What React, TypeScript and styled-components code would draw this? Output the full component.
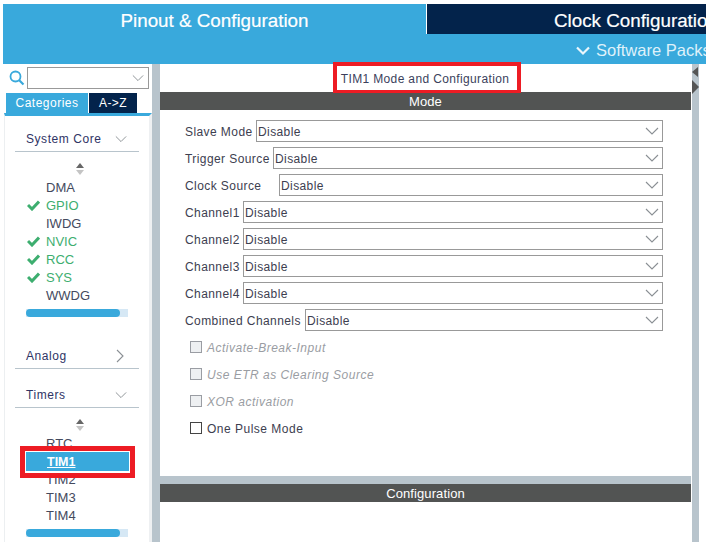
import React from "react";
import styled, { createGlobalStyle } from "styled-components";

const GlobalStyle = createGlobalStyle`
	html, body {
		margin: 0;
		padding: 0;
		background: #fff;
		overflow: hidden;
	}
	* {
		box-sizing: border-box;
	}
`;

const BLUE = "#39a9dc";
const NAVY = "#03234b";
const SPLIT = "#b8c4cc";
const RED = "#ed1c24";

type ItemData = { name: string; ok?: boolean; selected?: boolean };

const coreItems: ItemData[] = [
	{ name: "DMA" },
	{ name: "GPIO", ok: true },
	{ name: "IWDG" },
	{ name: "NVIC", ok: true },
	{ name: "RCC", ok: true },
	{ name: "SYS", ok: true },
	{ name: "WWDG" },
];

const timerItems: ItemData[] = [
	{ name: "RTC" },
	{ name: "TIM1", selected: true },
	{ name: "TIM2" },
	{ name: "TIM3" },
	{ name: "TIM4" },
];

const modeRows = [
	{ label: "Slave Mode", left: 256 },
	{ label: "Trigger Source", left: 273 },
	{ label: "Clock Source", left: 279 },
	{ label: "Channel1", left: 243 },
	{ label: "Channel2", left: 243 },
	{ label: "Channel3", left: 243 },
	{ label: "Channel4", left: 243 },
	{ label: "Combined Channels", left: 305 },
];

const checkRows = [
	{ label: "Activate-Break-Input", disabled: true },
	{ label: "Use ETR as Clearing Source", disabled: true },
	{ label: "XOR activation", disabled: true },
	{ label: "One Pulse Mode", disabled: false },
];

const Chevron = ({ size = 14, color = "#8a8f94", dir = "down" }: { size?: number; color?: string; dir?: "down" | "right" }) => (
	<svg width={size} height={size} viewBox="0 0 14 14" fill="none" stroke={color} strokeWidth="1.1">
		{dir === "down" ? <polyline points="1,4 7,10 13,4" /> : <polyline points="4,1 10,7 4,13" />}
	</svg>
);

const UpDown = () => (
	<ArrowWrap>
		<svg width="10" height="12" viewBox="0 0 10 12">
			<polygon points="5,0 9,5 1,5" fill="#666" />
			<polygon points="5,12 9,7 1,7" fill="#c4c4c4" />
		</svg>
	</ArrowWrap>
);

function SideList({ items }: { items: ItemData[] }) {
	return (
		<>
			<UpDown />
			<List>
				{items.map((item) => (
					<Item key={item.name} $ok={item.ok} $selected={item.selected}>
						{item.ok && (
							<CheckMark width="13" height="11" viewBox="0 0 13 11" fill="none" stroke="#3dae6f" strokeWidth="3">
								<polyline points="1,5 5,9 12,1.5" />
							</CheckMark>
						)}
						{item.selected && <SelectedBar />}
						<ItemName $selected={item.selected}>{item.name}</ItemName>
						{item.selected && <RedOutline />}
					</Item>
				))}
			</List>
			<ScrollTrack>
				<ScrollThumb />
			</ScrollTrack>
		</>
	);
}

export default function App() {
	return (
		<Page>
			<GlobalStyle />
			<Header>
				<TabRow>
					<PinoutTab>Pinout &amp; Configuration</PinoutTab>
					<ClockTab>Clock Configuration</ClockTab>
				</TabRow>
				<SubBar>
					<SubChevron width="14" height="10" viewBox="0 0 14 10" fill="none" stroke="#eaf6fc" strokeWidth="2.2">
						<polyline points="1,1.5 7,7.5 13,1.5" />
					</SubChevron>
					<SubLabel>Software Packs</SubLabel>
				</SubBar>
			</Header>
			<Body>
				<Sidebar>
					<SearchRow>
						<svg width="16" height="16" viewBox="0 0 16 16" fill="none" stroke={BLUE} strokeWidth="1.8">
							<circle cx="6.5" cy="6.5" r="5" />
							<line x1="10" y1="10" x2="14.5" y2="14.5" strokeWidth="2.2" />
						</svg>
						<SearchBox>
							<Chevron size={12} />
						</SearchBox>
					</SearchRow>
					<SideTabs>
						<CategoryTab>Categories</CategoryTab>
						<AzTab>A-&gt;Z</AzTab>
					</SideTabs>
					<SidePanel>
						<SectionHead $first>
							<HeadText>System Core</HeadText>
							<Chevron size={12} />
						</SectionHead>
						<SideList items={coreItems} />
						<SectionHead $top={26}>
							<HeadText>Analog</HeadText>
							<Chevron size={14} dir="right" />
						</SectionHead>
						<SectionHead $top={13}>
							<HeadText>Timers</HeadText>
							<Chevron size={12} />
						</SectionHead>
						<SideList items={timerItems} />
					</SidePanel>
				</Sidebar>
				<Splitter />
				<Main>
					<ModePane>
						<TitleRow>
							<TitleBox>TIM1 Mode and Configuration</TitleBox>
						</TitleRow>
						<DarkBar>Mode</DarkBar>
						<Form>
							{modeRows.map((row) => (
								<FormRow key={row.label}>
									<FieldLabel $width={row.left - 185}>{row.label}</FieldLabel>
									<SelectBox>
										<LowText>Disable</LowText>
										<Chevron />
									</SelectBox>
								</FormRow>
							))}
							{checkRows.map((row) => (
								<CheckRow key={row.label} $disabled={row.disabled}>
									<Box $disabled={row.disabled} />
									<LowText>{row.label}</LowText>
								</CheckRow>
							))}
						</Form>
					</ModePane>
					<HSplit />
					<DarkBar>Configuration</DarkBar>
				</Main>
				<RightEdge>
					<Handle>
						<svg width="6" height="14" viewBox="0 0 6 14">
							<polygon points="6,1 0,6 6,11" fill="#555" />
						</svg>
						<svg width="7" height="14" viewBox="0 0 7 14">
							<polygon points="0,0 7,7 0,14" fill="#555" />
						</svg>
					</Handle>
				</RightEdge>
			</Body>
		</Page>
	);
}

const Page = styled.div`
	width: 706px;
	height: 542px;
	overflow: hidden;
	background: #fff;
	font-family: "Liberation Sans", Arial, sans-serif;
	color: #3b3f5c;
`;

const Header = styled.header`
	height: 60px;
	margin: 4px 0 0 3px;
	background: ${BLUE};
`;

const TabRow = styled.div`
	display: flex;
	height: 30px;
`;

const PinoutTab = styled.div`
	width: 423px;
	text-align: center;
	color: #fff;
	font-size: 18.8px;
	line-height: 34px;
	-webkit-text-stroke: 0.2px #fff;
`;

const ClockTab = styled.div`
	flex: 1;
	margin-left: 1px;
	padding-left: 127px;
	background: ${NAVY};
	box-shadow: -1px 0 0 #fff;
	color: #fff;
	font-size: 18.8px;
	line-height: 34px;
	white-space: nowrap;
	overflow: hidden;
	-webkit-text-stroke: 0.2px #fff;
`;

const SubBar = styled.div`
	display: flex;
	align-items: center;
	gap: 6px;
	height: 30px;
	padding: 3px 0 0 573px;
	white-space: nowrap;
	overflow: hidden;
`;

const SubChevron = styled.svg`
	flex: none;
`;

const SubLabel = styled.span`
	flex: none;
	color: #dff1fa;
	font-size: 16.5px;
`;

const Body = styled.div`
	display: flex;
	height: 478px;
`;

const Sidebar = styled.aside`
	display: flex;
	flex-direction: column;
	width: 152px;
	flex-shrink: 0;
`;

const SearchRow = styled.div`
	display: flex;
	align-items: center;
	gap: 2px;
	height: 29px;
	padding: 2px 3px 3px 9px;
`;

const SearchBox = styled.div`
	display: flex;
	align-items: center;
	justify-content: flex-end;
	flex: 1;
	height: 22px;
	padding-right: 4px;
	border: 1px solid #999;
`;

const SideTabs = styled.div`
	display: flex;
	gap: 1px;
	height: 20px;
	padding-left: 6px;
`;

const CategoryTab = styled.div`
	width: 82px;
	background: ${BLUE};
	color: #fff;
	font-size: 12px;
	line-height: 20px;
	text-align: center;
	letter-spacing: 0.5px;
`;

const AzTab = styled.div`
	width: 48px;
	background: ${NAVY};
	color: #fff;
	font-size: 12px;
	line-height: 20px;
	text-align: center;
	letter-spacing: 0.4px;
`;

const SidePanel = styled.div`
	flex: 1;
	margin-left: 4px;
	border-top: 3px solid ${BLUE};
	border-left: 1px solid #eceff1;
	border-right: 3px solid #eef0f2;
`;

const SectionHead = styled.div<{ $first?: boolean; $top?: number }>`
	display: flex;
	align-items: center;
	justify-content: space-between;
	height: 26px;
	margin: ${(p) => (p.$first ? 10 : p.$top ?? 0)}px 10px 0 10px;
	padding: 0 12px 0 11px;
	border-bottom: 1px solid ${SPLIT};
	font-size: 12px;
	letter-spacing: 0.55px;
	color: #2f3465;
`;

const HeadText = styled.span`
	padding-top: 1px;
`;

const LowText = styled.span`
	padding-top: 2px;
`;

const ArrowWrap = styled.div`
	display: flex;
	justify-content: center;
	height: 26px;
	padding: 11px 0 0 6px;
`;

const List = styled.ul`
	list-style: none;
	margin: 0;
	padding: 0;
`;

const Item = styled.li<{ $ok?: boolean; $selected?: boolean }>`
	position: relative;
	height: 18px;
	padding-left: 41px;
	font-size: 13px;
	line-height: 20px;
	color: ${(p) => (p.$ok ? "#3dae6f" : "#444a5e")};
`;

const ItemName = styled.span<{ $selected?: boolean }>`
	position: relative;
	z-index: 2;
	${(p) =>
		p.$selected &&
		`
		margin-left: 1px;
		color: #fff;
		font-weight: bold;
		text-decoration: underline;
		font-size: 12.5px;
	`}
`;

const CheckMark = styled.svg`
	position: absolute;
	left: 22px;
	top: 4px;
`;

const SelectedBar = styled.div`
	position: absolute;
	z-index: 1;
	left: 21px;
	top: -1px;
	width: 103px;
	height: 20px;
	background: ${BLUE};
`;

const RedOutline = styled.div`
	position: absolute;
	z-index: 3;
	left: 15px;
	top: -6px;
	width: 115px;
	height: 32px;
	border: 5px solid ${RED};
	box-shadow: inset 0 0 0 1px #fff;
`;

const ScrollTrack = styled.div`
	width: 102px;
	height: 8px;
	margin: 5px 0 0 21px;
	background: #d6e8f5;
`;

const ScrollThumb = styled.div`
	width: 94px;
	height: 8px;
	border-radius: 4px;
	background: ${BLUE};
`;

const Splitter = styled.div`
	width: 8px;
	flex-shrink: 0;
	background: ${SPLIT};
`;

const Main = styled.main`
	display: flex;
	flex-direction: column;
	width: 531px;
	flex-shrink: 0;
`;

const ModePane = styled.section`
	height: 412px;
`;

const TitleRow = styled.div`
	display: flex;
	justify-content: center;
	height: 28px;
	font-size: 12px;
	letter-spacing: 0.36px;
`;

const TitleBox = styled.div`
	position: relative;
	z-index: 1;
	height: 31px;
	margin: -2px 0 0 3px;
	padding: 0 8px 0 4px;
	border: 4px solid ${RED};
	border-bottom-width: 3px;
	line-height: 27px;
	white-space: nowrap;
`;

const DarkBar = styled.div`
	height: 18px;
	background: #525453;
	color: #fff;
	font-size: 13px;
	line-height: 19px;
	letter-spacing: 0.1px;
	text-align: center;
`;

const Form = styled.div`
	display: flex;
	flex-direction: column;
	gap: 5px;
	padding: 10px 28px 0 25px;
`;

const FormRow = styled.div`
	display: flex;
	align-items: center;
	height: 22px;
`;

const FieldLabel = styled.label<{ $width: number }>`
	width: ${(p) => p.$width}px;
	flex-shrink: 0;
	padding-top: 2px;
	font-size: 12px;
	letter-spacing: 0.42px;
	white-space: nowrap;
	color: #3d4050;
`;

const SelectBox = styled.div`
	display: flex;
	align-items: center;
	justify-content: space-between;
	flex: 1;
	height: 22px;
	padding: 0 3px 0 1px;
	border: 1px solid #999;
	font-size: 12px;
	letter-spacing: 0.4px;
	color: #3d4050;
`;

const CheckRow = styled.div<{ $disabled?: boolean }>`
	display: flex;
	align-items: center;
	gap: 5px;
	height: 22px;
	padding-left: 5px;
	font-size: 12px;
	letter-spacing: 0.5px;
	font-style: ${(p) => (p.$disabled ? "italic" : "normal")};
	color: ${(p) => (p.$disabled ? "#9a9da3" : "#3d4050")};
`;

const Box = styled.span<{ $disabled?: boolean }>`
	width: 12px;
	height: 12px;
	border: 1px solid ${(p) => (p.$disabled ? "#9a9da3" : "#444")};
	background: ${(p) => (p.$disabled ? "#eef0f2" : "#fff")};
`;

const HSplit = styled.div`
	height: 8px;
	background: ${SPLIT};
`;

const RightEdge = styled.div`
	width: 7px;
	margin-left: 1px;
	flex-shrink: 0;
	background: ${SPLIT};
`;

const Handle = styled.div`
	display: flex;
	flex-direction: column;
	padding-top: 2px;
`;
